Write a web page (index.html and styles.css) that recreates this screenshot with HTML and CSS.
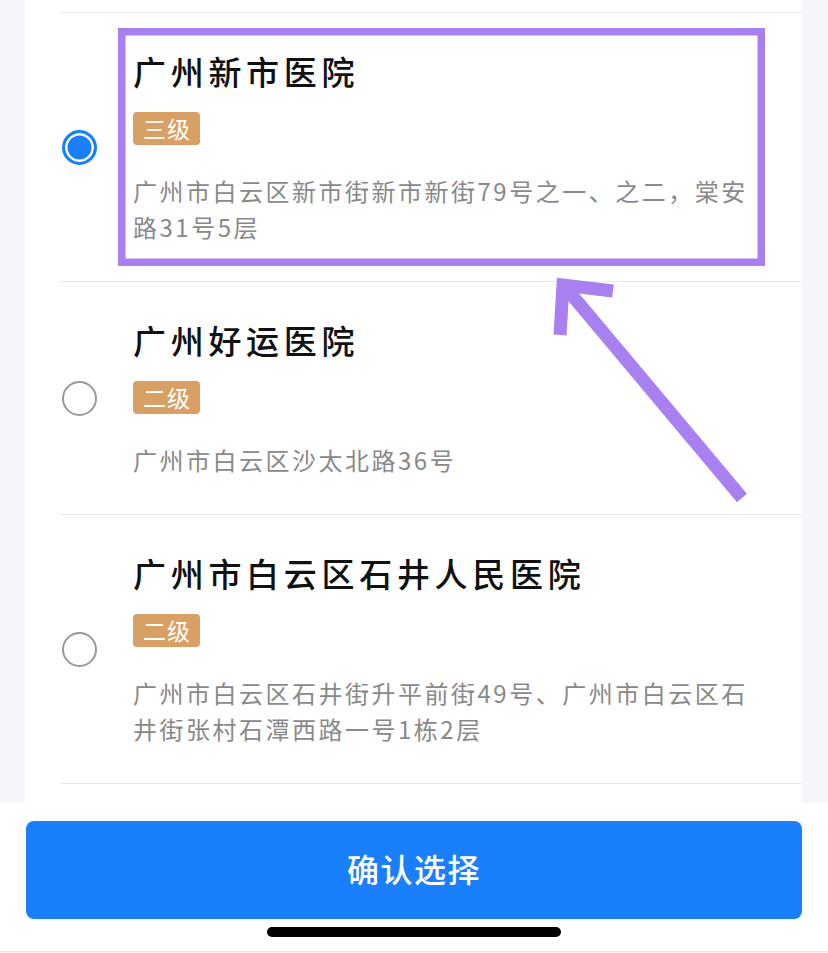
FILE: index.html
```html
<!DOCTYPE html>
<html lang="zh-CN">
<head>
    <meta charset="UTF-8">
    <meta name="viewport" content="width=device-width, initial-scale=1.0">
    <title>选择医院</title>
    <link rel="stylesheet" href="styles.css">
</head>
<body>
    <div class="page">
        <div class="card">
            <div class="row row-cut"></div>

            <div class="row">
                <span class="radio checked"></span>
                <div class="info">
                    <h3 class="name">广州新市医院</h3>
                    <span class="level">三级</span>
                    <p class="address">广州市白云区新市街新市新街79号之一、之二，棠安路31号5层</p>
                </div>
            </div>

            <div class="row">
                <span class="radio"></span>
                <div class="info">
                    <h3 class="name">广州好运医院</h3>
                    <span class="level">二级</span>
                    <p class="address">广州市白云区沙太北路36号</p>
                </div>
            </div>

            <div class="row">
                <span class="radio"></span>
                <div class="info">
                    <h3 class="name">广州市白云区石井人民医院</h3>
                    <span class="level">二级</span>
                    <p class="address">广州市白云区石井街升平前街49号、广州市白云区石井街张村石潭西路一号1栋2层</p>
                </div>
            </div>
        </div>

        <div class="footer">
            <button class="btn-confirm">确认选择</button>
            <div class="home-bar"></div>
        </div>

        <!-- annotation drawn over the screenshot -->
        <svg class="annotation" width="828" height="953" viewBox="0 0 828 953">
            <rect x="121.75" y="31.75" width="639.5" height="230.5" fill="none" stroke="#a980f0" stroke-width="7.5"/>
            <line x1="742" y1="498" x2="566" y2="288" stroke="#a980f0" stroke-width="13"/>
            <polyline points="613,291 563,285 560,335" fill="none" stroke="#a980f0" stroke-width="13" stroke-linejoin="miter"/>
        </svg>
    </div>
</body>
</html>
```

FILE: styles.css
```css
:root {
    --blue: #1a7ffb;
    --gold: #d9a066;
    --line: #e8e8e8;
    --page-bg: #f4f6f9;
}

* {
    margin: 0;
    padding: 0;
    box-sizing: border-box;
}

body {
    background: var(--page-bg);
    font-family: "Noto Sans CJK SC", "Noto Sans", sans-serif;
    color: #111;
}

.page {
    position: relative;
    width: 828px;
    height: 953px;
    overflow: hidden;
}

.card {
    margin: 0 26px 0 25px;
    height: 803px;
    background: #fff;
    overflow: hidden;
}

.row {
    display: flex;
    align-items: center;
    gap: 36px;
    margin-left: 35px;
    padding: 39px 30px 36px 2px;
    border-bottom: 1px solid var(--line);
}

.row-cut {
    height: 13px;
    padding: 0;
}

.radio {
    flex: none;
    width: 35px;
    height: 35px;
    margin-top: -3px;
    border-radius: 50%;
    border: 2px solid #999;
}

.radio.checked {
    border: 3px solid var(--blue);
    background: var(--blue);
    box-shadow: inset 0 0 0 2.5px #fff;
}

.info {
    flex: 1;
}

.name {
    font-size: 33px;
    line-height: 38px;
    font-weight: 500;
    letter-spacing: 4.7px;
    color: #111;
}

.level {
    display: inline-block;
    margin-top: 22px;
    height: 33px;
    padding: 0 9px 0 10px;
    border-radius: 4px;
    background: var(--gold);
    color: #fff;
    font-size: 23px;
    line-height: 33px;
    letter-spacing: 1px;
    vertical-align: top;
}

.address {
    margin-top: 28px;
    font-size: 24px;
    line-height: 36px;
    letter-spacing: 2.5px;
    color: #898989;
}

.footer {
    height: 149px;
    background: #fff;
    padding-top: 18px;
    border-bottom: 1px solid var(--line);
    display: flex;
    flex-direction: column;
    align-items: center;
}

.btn-confirm {
    width: 776px;
    height: 98px;
    padding-bottom: 4px;
    border: none;
    border-radius: 8px;
    background: var(--blue);
    color: #fff;
    font-family: inherit;
    font-size: 32px;
    font-weight: 500;
    letter-spacing: 1.5px;
}

.home-bar {
    margin-top: 8px;
    width: 294px;
    height: 10px;
    border-radius: 5px;
    background: #000;
}

.annotation {
    position: absolute;
    top: 0;
    left: 0;
    pointer-events: none;
}
```
